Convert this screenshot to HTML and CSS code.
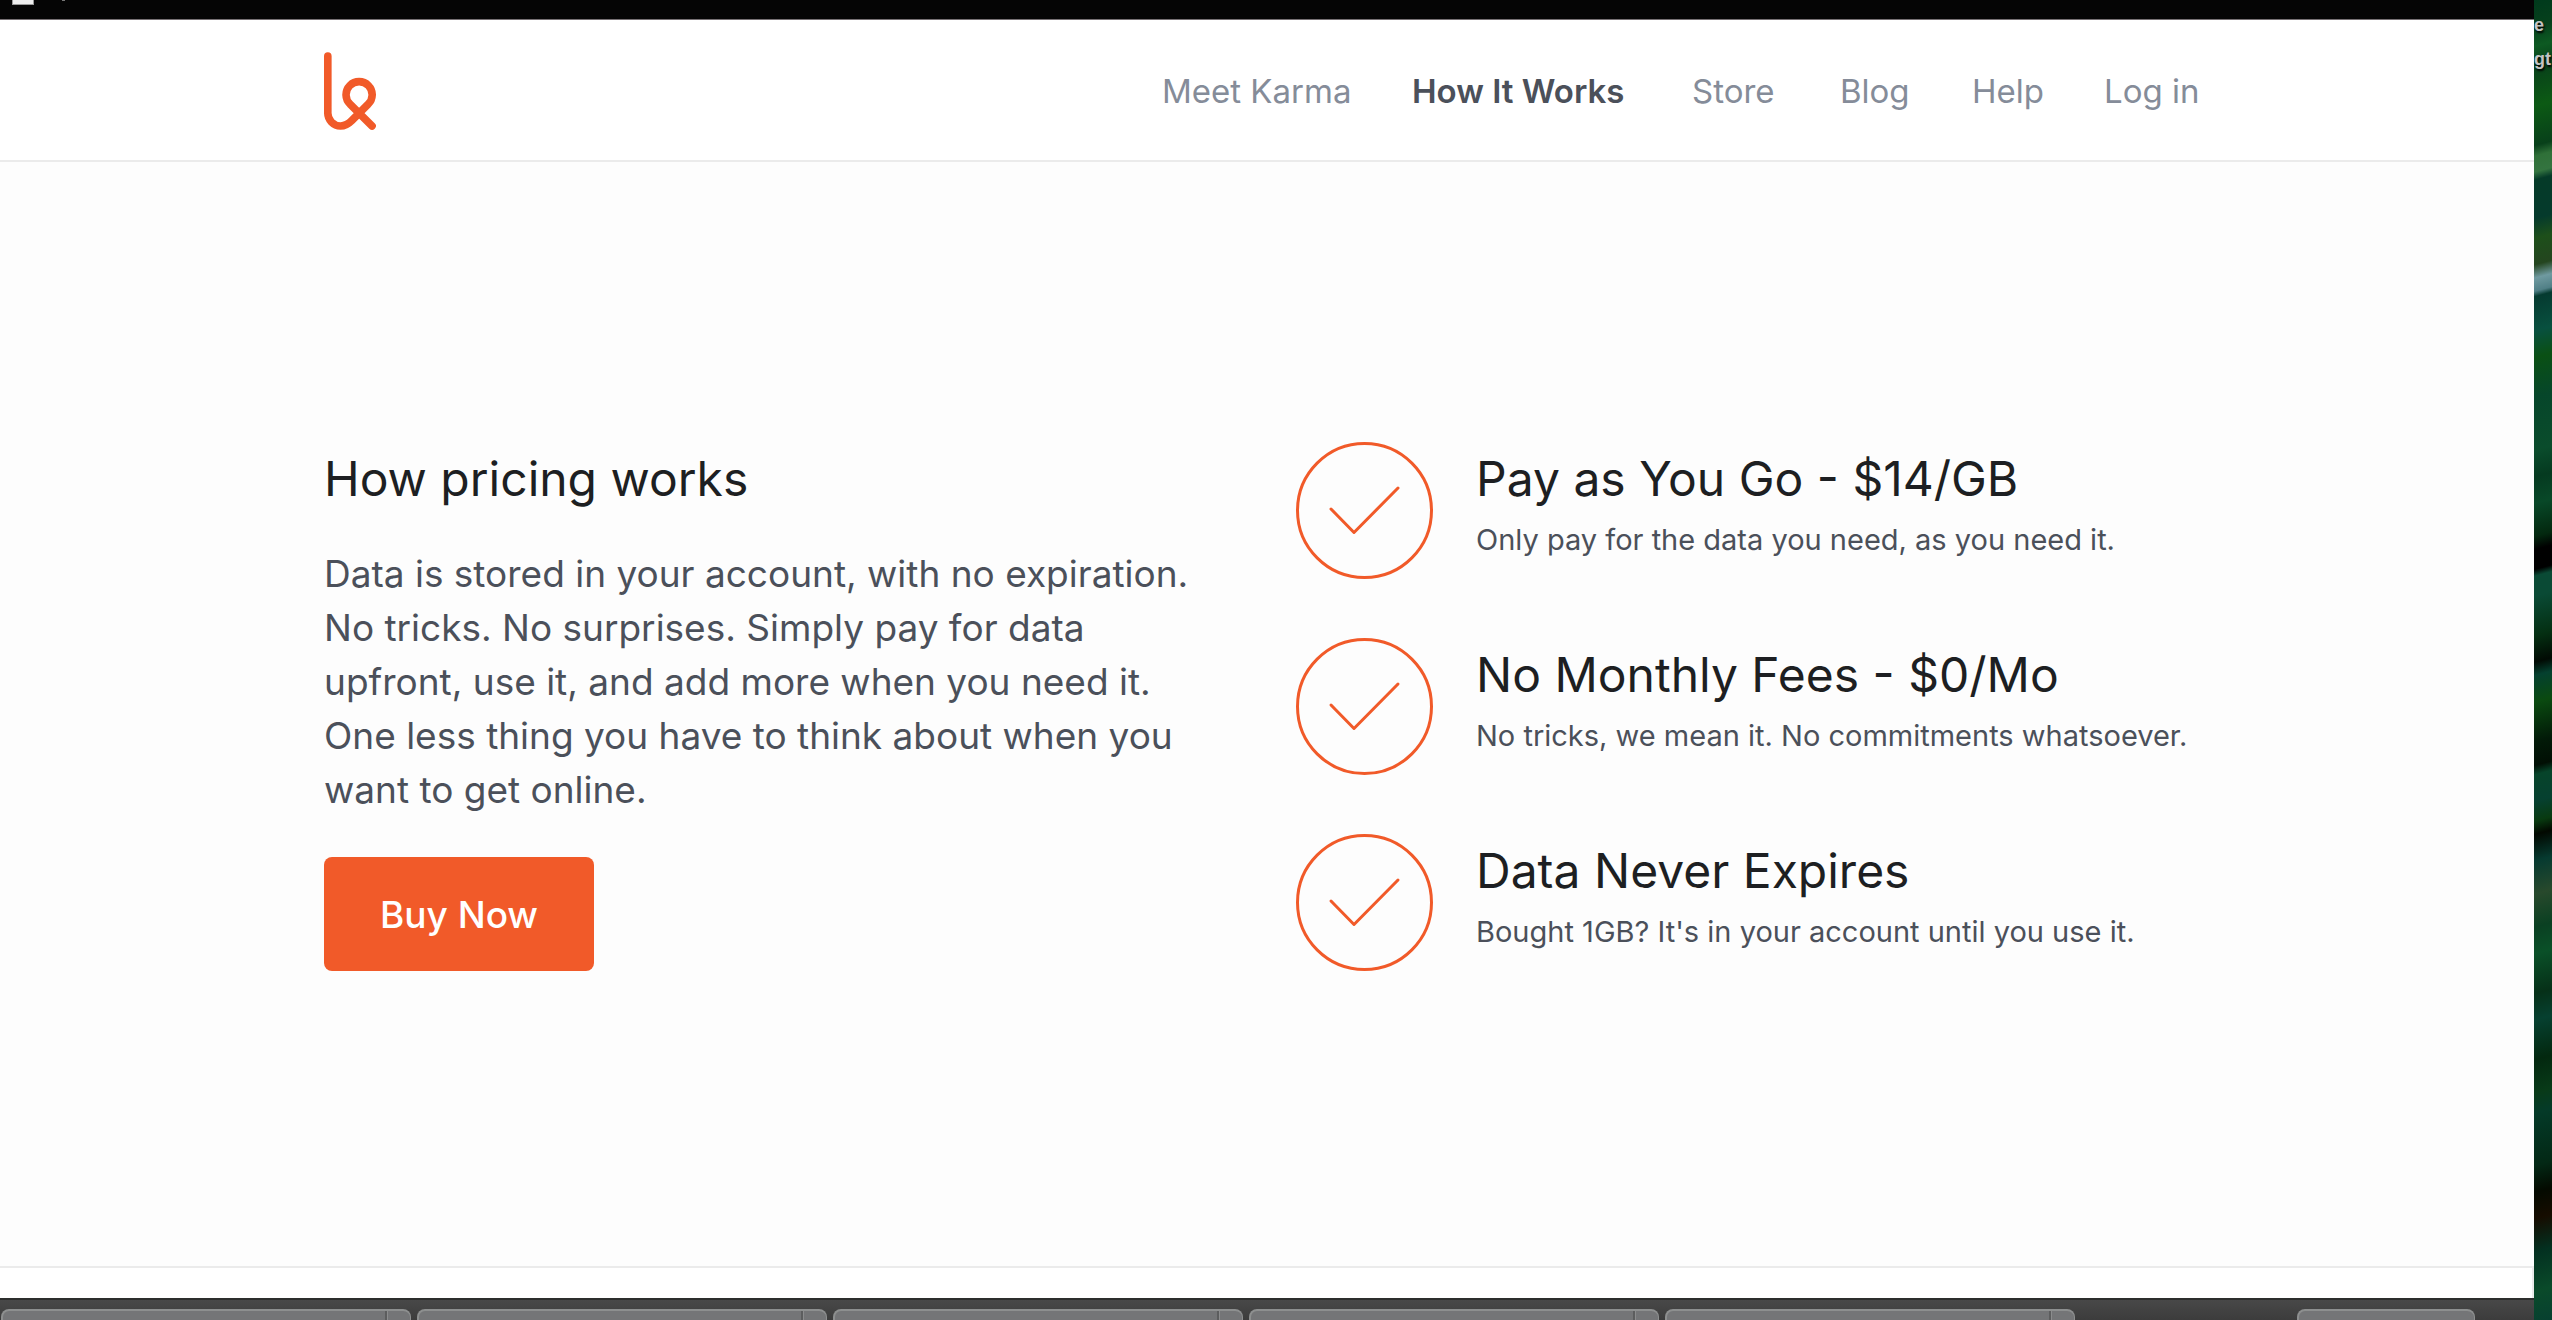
FILE: index.html
```html
<!DOCTYPE html>
<html lang="en">
<head>
<meta charset="utf-8">
<title>How It Works</title>
<link rel="stylesheet" href="styles.css">
</head>
<body>
<svg class="symbols" aria-hidden="true">
  <symbol id="check" viewBox="0 0 138 138">
    <circle cx="68.500" cy="68.500" r="67"/>
    <path d="M35 67 L58 90.500 L102 46"/>
  </symbol>
</svg>
<div class="window">
  <div class="topbar"><span class="topbar-box"></span><span class="topbar-dot"></span></div>
  <header class="header">
    <a class="logo" href="#" aria-label="Karma">
      <svg viewBox="72 66 157 234" aria-hidden="true"><path d="M83.500 77.500 V249 A39 39 0 0 0 122 288.500 C138 288.500 147 281 156 272 L205 223 A39.500 39.500 0 1 0 151 223 L217 288.500"/></svg>
    </a>
    <nav class="nav">
      <a href="#">Meet Karma</a>
      <a class="current" href="#">How It Works</a>
      <a href="#">Store</a>
      <a href="#">Blog</a>
      <a href="#">Help</a>
      <a href="#">Log in</a>
    </nav>
  </header>
  <main class="pricing">
    <section class="intro">
      <h1>How pricing works</h1>
      <p>Data is stored in your account, with no expiration. No tricks. No surprises. Simply pay for data upfront, use it, and add more when you need it. One less thing you have to think about when you want to get online.</p>
      <button class="buy" type="button">Buy Now</button>
    </section>
    <ul class="features">
      <li>
        <svg class="check" aria-hidden="true"><use href="#check"/></svg>
        <div class="feature-text"><h2>Pay as You Go - $14/GB</h2><p>Only pay for the data you need, as you need it.</p></div>
      </li>
      <li>
        <svg class="check" aria-hidden="true"><use href="#check"/></svg>
        <div class="feature-text"><h2>No Monthly Fees - $0/Mo</h2><p>No tricks, we mean it. No commitments whatsoever.</p></div>
      </li>
      <li>
        <svg class="check" aria-hidden="true"><use href="#check"/></svg>
        <div class="feature-text"><h2>Data Never Expires</h2><p>Bought 1GB? It's in your account until you use it.</p></div>
      </li>
    </ul>
  </main>
  <div class="next"></div>
  <div class="dock">
    <span class="tab"></span><span class="tab"></span><span class="tab"></span><span class="tab"></span><span class="tab"></span>
    <span class="tab tab-small"></span>
  </div>
</div>
<aside class="wallpaper"><span>e</span><span>gt</span></aside>
</body>
</html>
```
FILE: styles.css
```css
* { box-sizing: border-box; margin: 0; padding: 0; }

body {
  display: grid;
  grid-template-columns: 1fr 18px;
  min-height: 100vh;
  background: #fdfdfd;
  color: #4b505a;
  font-family: Inter, "Liberation Sans", sans-serif;
}

a { color: inherit; text-decoration: none; }
.symbols { position: absolute; width: 0; height: 0; }

.window {
  display: flex;
  flex-direction: column;
  min-width: 0;
}

.topbar {
  display: flex;
  gap: 28px;
  height: 20px;
  padding-left: 12px;
  background: #050505;
  border-bottom: 1px solid #777174;
}
.topbar-box {
  width: 22px;
  height: 5px;
  background: #eee;
  border: 1px solid #999;
  border-top: 0;
}
.topbar-dot { width: 3px; height: 1px; background: #777; }

.header {
  display: flex;
  align-items: center;
  justify-content: space-between;
  height: 142px;
  padding: 2px 330px 0 324px;
  background: #fff;
  border-bottom: 2px solid #ebebeb;
}
.logo svg {
  display: block;
  width: 52px;
  height: 78px;
  fill: none;
  stroke: #f15a29;
  stroke-width: 23;
  stroke-linecap: round;
}
.nav {
  display: grid;
  grid-template-columns: 250px 280px 148px 132px 132px 100px;
  color: #858c99;
  font-size: 33px;
  line-height: 40px;
  white-space: nowrap;
}
.nav .current { color: #4b505a; font-weight: 600; }

.pricing {
  flex: 1;
  display: grid;
  grid-template-columns: 1fr 1fr;
  gap: 64px;
  align-items: start;
  padding: 280px 330px 0 324px;
}
h1, h2 {
  color: #1d1f22;
  font-size: 48px;
  font-weight: 400;
  line-height: 56px;
}
.intro { padding-top: 9px; }
.intro p {
  max-width: 890px;
  margin: 40px 0;
  font-size: 37px;
  line-height: 54px;
}
.buy {
  width: 270px;
  height: 114px;
  border: 0;
  border-radius: 8px;
  background: #f15a29;
  color: #fff;
  font: 500 37px Inter, "Liberation Sans", sans-serif;
}

.features { display: grid; gap: 58px; list-style: none; }
.features li { display: flex; gap: 42px; }
.check {
  flex: none;
  width: 138px;
  height: 138px;
  fill: none;
  stroke: #f15a29;
  stroke-width: 3;
  stroke-linecap: round;
  stroke-linejoin: round;
}
.feature-text { padding-top: 9px; white-space: nowrap; }
.feature-text p {
  margin-top: 13px;
  font-size: 29px;
  line-height: 40px;
}

.next {
  height: 32px;
  background: #fff;
  border-top: 2px solid #ebebeb;
  border-right: 2px solid #ebebeb;
}

.dock {
  display: flex;
  gap: 6px;
  height: 22px;
  padding: 9px 59px 0 1px;
  overflow: hidden;
  background: linear-gradient(#484848, #3c3c3c);
  border-top: 2px solid #2c2e2d;
}
.tab {
  flex: 0 1 410px;
  height: 30px;
  background: linear-gradient(90deg, transparent 382px, #5c5d5e 382px 384px, #8b8c8d 384px 385px, transparent 385px) #747577;
  border: 2px solid #8d8f8f;
  border-bottom: 0;
  border-right-width: 1px;
  border-radius: 8px 8px 0 0;
}
.tab-small { flex-basis: 178px; margin-left: auto; }

.wallpaper {
  padding-top: 8px;
  color: #c4c4c4;
  font: 700 18px/34px "Liberation Sans", sans-serif;
  text-shadow: 1px 2px 2px #000;
  background: linear-gradient(165deg,
    #003a1c 0, #06401c 2%, #0d5a22 3.500%, #08401a 5%, #0c5a14 8%, #08401a 11%,
    #2f7038 11.800%, #347440 13%, #053a28 13.600%, #053a2c 16.500%, #1d4f1a 18%, #24451f 20%,
    #6f9aa0 21%, #507f86 22%, #053a30 22.400%, #08503f 25%, #0a5014 27%, #06462a 30%,
    #0a4c2c 34%, #053a20 36%, #084828 38%, #03280f 40.500%, #000 41.500%, #000 43%,
    #0a4a35 43.500%, #0a4a35 45%, #042f12 48%, #010a03 50%, #04402f 51%, #0a4a10 53%,
    #021a08 56%, #010f04 57.800%, #06442a 58.500%, #064030 60.500%, #083a10 62%, #020800 63%,
    #063a30 65%, #28492c 67.500%, #0a4022 70%, #0a5028 72%, #063018 75%, #064030 77%,
    #03280f 80%, #083a18 82.500%, #043a28 84%, #032815 88%, #040a00 90%, #160c00 92%,
    #033020 94.500%, #0a4a2a 97.500%, #074030 100%);
}
.wallpaper span { display: block; }
```
